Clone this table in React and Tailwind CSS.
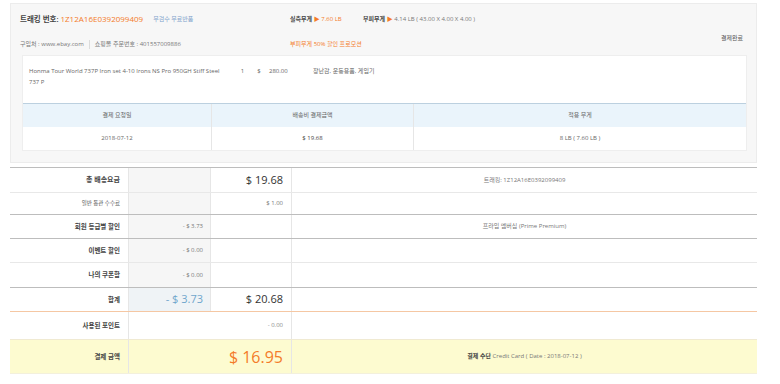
export default function App() {
  const font = "font-['Open_Sans','Noto_Sans_CJK_KR',sans-serif]";
  const vl = "border-l border-[#e6e6e6]";
  return (
    <div className={`w-[780px] h-[384px] bg-white ${font} text-[#555] overflow-hidden`}>
      <div className="pl-[10px] pt-[3px] w-[757px]">
        {/* top panel */}
        <div className="h-[160px] bg-[#f7f7f7] border border-[#ececec] flex flex-col">
          <div className="flex h-[51px]">
            <div className="flex-1 flex flex-col pl-[9px]">
              <div className="h-[30px] flex items-center">
                <div className="w-[270px] flex items-center gap-[10px]">
                  <span className="text-[7.5px] font-semibold text-[#444] whitespace-nowrap">
                    트래킹 번호: <span className="text-[#f47b2a] font-normal text-[8px]">1Z12A16E0392099409</span>
                  </span>
                  <span className="text-[6px] text-[#7fa3cc] whitespace-nowrap">무검수 무료반품</span>
                </div>
                <div className="w-[73px] text-[6px] whitespace-nowrap">
                  <span className="font-semibold text-[#444]">실측무게</span>{" "}
                  <span className="text-[#f47b2a]">▶ 7.60 LB</span>
                </div>
                <div className="text-[6px] whitespace-nowrap">
                  <span className="font-semibold text-[#444]">부피무게</span>{" "}
                  <span className="text-[#f47b2a]">▶</span>{" "}
                  <span className="text-[#777]">4.14 LB ( 43.00 X 4.00 X 4.00 )</span>
                </div>
              </div>
              <div className="h-[21px] flex items-center">
                <div className="w-[270px] flex items-center text-[6px] text-[#777] whitespace-nowrap">
                  <span>구입처 : www.ebay.com</span>
                  <span className="mx-[5px] w-px h-[9px] bg-[#dcdcdc]"></span>
                  <span>쇼핑몰 주문번호 : 401557009886</span>
                </div>
                <div className="text-[6px] text-[#f47b2a] whitespace-nowrap">부피무게 50% 할인 프로모션</div>
              </div>
            </div>
            <div className="pr-[13px] pt-[30px] text-[6px] text-[#555] whitespace-nowrap">결제완료</div>
          </div>
          {/* white box */}
          <div className="ml-[11px] mr-[9px] bg-white border border-[#eeeeee] flex flex-col">
            <div className="h-[47px] flex items-start pt-[10px] pl-[6px] text-[6px] text-[#666] leading-[11px]">
              <div className="w-[206px]">
                Honma Tour World 737P Iron set 4-10 Irons NS Pro 950GH Stiff Steel
                <br />
                737 P
              </div>
              <div className="w-[15px] text-center">1</div>
              <div className="w-[18px] text-center">$</div>
              <div className="w-[45px] pl-[1px]">280.00</div>
              <div className="whitespace-nowrap">장난감, 운동용품, 게임기</div>
            </div>
            <div className="grid grid-cols-[188px_202px_1fr] border-t border-[#bcd0df] text-[6px] text-[#666]">
              <div className="h-[23px] bg-[#eaf4fb] flex items-center justify-center">결제 요청일</div>
              <div className={`h-[23px] bg-[#eaf4fb] flex items-center justify-center ${vl}`}>배송비 결제금액</div>
              <div className={`h-[23px] bg-[#eaf4fb] flex items-center justify-center ${vl}`}>적용 무게</div>
              <div className="h-[23px] flex items-center justify-center">2018-07-12</div>
              <div className={`h-[23px] flex items-center justify-center text-[#444] ${vl}`}>$ 19.68</div>
              <div className={`h-[23px] flex items-center justify-center ${vl}`}>8 LB ( 7.60 LB )</div>
            </div>
          </div>
        </div>

        {/* bottom table */}
        <div className="mt-[4px] border-t border-[#bdbdbd] text-[#444]">
          {/* row 1 */}
          <div className="grid grid-cols-[118px_82px_81px_1fr] h-[25px] border-b border-[#e8e8e8]">
            <div className="flex items-center justify-end pr-[8px] text-[7px] font-semibold">총 배송요금</div>
            <div className={`bg-[#f6f6f6] ${vl}`}></div>
            <div className={`flex items-center justify-end pr-[8px] text-[11px] text-[#333] ${vl}`}>$ 19.68</div>
            <div className={`flex items-center justify-center text-[6px] text-[#777] ${vl}`}>트래킹: 1Z12A16E0392099409</div>
          </div>
          {/* row 2 */}
          <div className="grid grid-cols-[118px_82px_81px_1fr] h-[22px] border-b border-[#bdbdbd]">
            <div className="flex items-center justify-end pr-[8px] text-[5.5px] text-[#555]">일반 통관 수수료</div>
            <div className={`bg-[#f6f6f6] ${vl}`}></div>
            <div className={`flex items-center justify-end pr-[8px] text-[6px] text-[#777] ${vl}`}>$ 1.00</div>
            <div className={vl}></div>
          </div>
          {/* row 3 */}
          <div className="grid grid-cols-[118px_82px_81px_1fr] h-[24px] border-b border-[#bdbdbd]">
            <div className="flex items-center justify-end pr-[8px] text-[6.5px] font-semibold">회원 등급별 할인</div>
            <div className={`bg-[#f6f6f6] flex items-center justify-end pr-[7px] text-[6px] text-[#777] ${vl}`}>- $ 3.73</div>
            <div className={vl}></div>
            <div className={`flex items-center justify-center text-[6px] text-[#777] ${vl}`}>프라임 멤버십 (Prime Premium)</div>
          </div>
          {/* row 4 */}
          <div className="grid grid-cols-[118px_82px_81px_1fr] h-[24px] border-b border-[#e8e8e8]">
            <div className="flex items-center justify-end pr-[8px] text-[6.5px] font-semibold">이벤트 할인</div>
            <div className={`bg-[#f6f6f6] flex items-center justify-end pr-[7px] text-[6px] text-[#777] ${vl}`}>- $ 0.00</div>
            <div className={vl}></div>
            <div className={vl}></div>
          </div>
          {/* row 5 */}
          <div className="grid grid-cols-[118px_82px_81px_1fr] h-[25px] border-b border-[#bdbdbd]">
            <div className="flex items-center justify-end pr-[8px] text-[6.5px] font-semibold">나의 쿠폰함</div>
            <div className={`bg-[#f6f6f6] flex items-center justify-end pr-[7px] text-[6px] text-[#777] ${vl}`}>- $ 0.00</div>
            <div className={vl}></div>
            <div className={vl}></div>
          </div>
          {/* row 6 */}
          <div className="grid grid-cols-[118px_82px_81px_1fr] h-[24px] border-b border-[#f5c7a3]">
            <div className="flex items-center justify-end pr-[8px] text-[6.5px] font-semibold">합계</div>
            <div className={`bg-[#eff3f6] flex items-center justify-end pr-[7px] text-[11px] text-[#6fa6cc] ${vl}`}>- $ 3.73</div>
            <div className={`flex items-center justify-end pr-[8px] text-[11px] text-[#333] ${vl}`}>$ 20.68</div>
            <div className={vl}></div>
          </div>
          {/* row 7 */}
          <div className="grid grid-cols-[118px_163px_1fr] h-[28px] border-b border-[#f0ead2]">
            <div className="flex items-center justify-end pr-[8px] text-[6.5px] font-semibold">사용된 포인트</div>
            <div className={`flex items-center justify-end pr-[8px] text-[6px] text-[#888] ${vl}`}>- 0.00</div>
            <div className={vl}></div>
          </div>
          {/* row 8 */}
          <div className="grid grid-cols-[118px_163px_1fr] h-[34px] bg-[#fdfbd0] border-b border-[#f3f0dc]">
            <div className="flex items-center justify-end pr-[8px] text-[6.5px] font-semibold">결제 금액</div>
            <div className={`flex items-center justify-end pr-[8px] text-[16px] text-[#f47b2a] ${vl}`}>$ 16.95</div>
            <div className={`flex items-center justify-center text-[6px] text-[#777] ${vl}`}>
              <span className="font-semibold text-[#444]">결제 수단</span>&nbsp;Credit Card ( Date : 2018-07-12 )
            </div>
          </div>
        </div>
      </div>
    </div>
  );
}
